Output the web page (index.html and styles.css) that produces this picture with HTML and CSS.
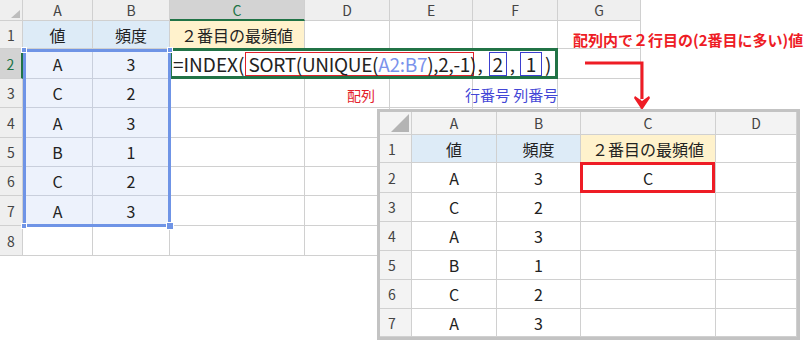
FILE: index.html
```html
<!DOCTYPE html>
<html lang="ja">
<head>
    <meta charset="UTF-8">
    <title>INDEX SORT UNIQUE 最頻値</title>
    <link rel="stylesheet" href="styles.css">
</head>
<body>
<div class="page">

    <!-- 数式を入力中のシート -->
    <div class="sheet sheet-main">
        <div class="corner"><span class="tri"></span></div>
        <div class="hd">A</div><div class="hd">B</div><div class="hd sel">C</div><div class="hd">D</div><div class="hd">E</div><div class="hd">F</div><div class="hd">G</div>

        <div class="rh">1</div><div class="c blue">値</div><div class="c blue">頻度</div><div class="c yellow">２番目の最頻値</div><div class="c"></div><div class="c"></div><div class="c"></div><div class="c"></div>

        <div class="rh sel">2</div><div class="c ref">A</div><div class="c ref">3</div>
        <div class="c formula">
            <span>=INDEX(</span><span class="box box-red">SORT(UNIQUE(<span class="rng">A2:B7</span>),2,-1)</span><span class="sep">,</span><span class="box box-blue">2</span><span class="sep sep-short">,</span><span class="box box-blue box-wide">1</span><span class="close">)</span>
        </div>
        <div class="c"></div>

        <div class="rh">3</div><div class="c ref">C</div><div class="c ref">2</div><div class="c"></div><div class="c"></div><div class="c"></div><div class="c"></div><div class="c"></div>
        <div class="rh">4</div><div class="c ref">A</div><div class="c ref">3</div><div class="c"></div><div class="c"></div><div class="c"></div><div class="c"></div><div class="c"></div>
        <div class="rh">5</div><div class="c ref">B</div><div class="c ref">1</div><div class="c"></div><div class="c"></div><div class="c"></div><div class="c"></div><div class="c"></div>
        <div class="rh">6</div><div class="c ref">C</div><div class="c ref">2</div><div class="c"></div><div class="c"></div><div class="c"></div><div class="c"></div><div class="c"></div>
        <div class="rh">7</div><div class="c ref">A</div><div class="c ref">3</div><div class="c"></div><div class="c"></div><div class="c"></div><div class="c"></div><div class="c"></div>
        <div class="rh">8</div><div class="c"></div><div class="c"></div><div class="c"></div><div class="c"></div><div class="c"></div><div class="c"></div><div class="c"></div>

        <!-- 参照範囲 A2:B7 の枠 -->
        <div class="range">
            <span class="handle h-tl"></span><span class="handle h-tr"></span><span class="handle h-bl"></span><span class="handle h-br"></span>
        </div>

        <span class="note note-array">配列</span>
        <span class="note note-rowcol">行番号 列番号</span>
    </div>

    <div class="title">配列内で２行目の(2番目に多い)値</div>

    <svg class="arrow" width="80" height="60" viewBox="0 0 80 60">
        <polyline points="5,8 62,8 62,44" fill="none" stroke="#ee1c25" stroke-width="3"/>
        <polygon points="55,41 62,46 69,41 70,43 62,55 54,43" fill="#ee1c25"/>
    </svg>

    <!-- 結果のシート -->
    <div class="sheet sheet-sub">
        <div class="corner"><span class="tri"></span></div>
        <div class="hd">A</div><div class="hd">B</div><div class="hd">C</div><div class="hd">D</div>

        <div class="rh">1</div><div class="c blue">値</div><div class="c blue">頻度</div><div class="c yellow">２番目の最頻値</div><div class="c"></div>
        <div class="rh">2</div><div class="c">A</div><div class="c">3</div><div class="c">C</div><div class="c"></div>
        <div class="rh">3</div><div class="c">C</div><div class="c">2</div><div class="c"></div><div class="c"></div>
        <div class="rh">4</div><div class="c">A</div><div class="c">3</div><div class="c"></div><div class="c"></div>
        <div class="rh">5</div><div class="c">B</div><div class="c">1</div><div class="c"></div><div class="c"></div>
        <div class="rh">6</div><div class="c">C</div><div class="c">2</div><div class="c"></div><div class="c"></div>
        <div class="rh">7</div><div class="c">A</div><div class="c">3</div><div class="c"></div><div class="c"></div>

        <div class="result"></div>
    </div>

</div>
</body>
</html>
```

FILE: styles.css
```css
body {
    margin: 0;
    font-family: "Noto Sans CJK JP", "Liberation Sans", sans-serif;
    color: #222;
    background: #fff;
}
.page {
    position: relative;
    width: 809px;
    height: 340px;
    overflow: hidden;
}
.sheet {
    display: grid;
    position: relative;
    background: #fff;
}
.sheet-main {
    grid-template-columns: 23px 70px 77px 135px 85px 83px 85px 83px;
    grid-template-rows: 21px 28px 30px 29px 30px 29px 29px 30px 30px;
    width: 641px;
}
.sheet-sub {
    position: absolute;
    left: 377px;
    top: 109px;
    border: 3px solid #c3c3c3;
    grid-template-columns: 32px 85px 84px 135px 81px;
    grid-template-rows: 23px 28px 30px 29px 29px 29px 29px 28px;
}

/* セル */
.c, .hd, .rh, .corner {
    box-sizing: border-box;
    border-right: 1px solid #d0d0d0;
    border-bottom: 1px solid #d0d0d0;
    display: flex;
    align-items: center;
    justify-content: center;
    white-space: nowrap;
}
.c {
    font-size: 16px;
}
.hd, .rh, .corner {
    background: #efefef;
    color: #444;
    font-size: 14px;
}
.sheet-sub .hd, .sheet-sub .rh, .sheet-sub .corner {
    background: #f3f3f3;
}
.sheet-sub .rh {
    justify-content: flex-start;
    padding-left: 8px;
}
.hd.sel {
    background: #d3d3d3;
    color: #217346;
    border-bottom: 2px solid #217346;
}
.rh.sel {
    background: #d3d3d3;
    color: #217346;
    border-right: 2px solid #217346;
}
.corner {
    position: relative;
}
.tri {
    position: absolute;
    right: 2px;
    bottom: 2px;
    width: 0;
    height: 0;
    border-left: 9px solid transparent;
    border-bottom: 8px solid #bdbdbd;
}
.sheet-sub .tri {
    right: 2px;
    bottom: 2px;
    border-left: 18px solid transparent;
    border-bottom: 18px solid #b4b4b4;
}
.blue {
    background: #ddebf7;
}
.yellow {
    background: #fff2cc;
}
.ref {
    background: #edf2fc;
    border-color: #c9cfdc;
}

/* 数式 */
.formula {
    grid-column: 4 / 8;
    justify-content: flex-start;
    border: 3px solid #217346;
    margin: -1px 0 0 -1px;
    padding-left: 1px;
    font-size: 19px;
    color: #222;
}
.box {
    box-sizing: border-box;
    height: 24px;
    line-height: 22px;
    padding: 0 2px;
    display: inline-block;
}
.box-red {
    border: 1px solid #e0202a;
    margin-left: 1px;
    width: 229px;
    letter-spacing: -0.3px;
}
.box-blue {
    border: 1px solid #3b3fcf;
    width: 18px;
    text-align: center;
    padding: 0;
}
.box-wide {
    width: 22px;
}
.sep {
    padding: 0 6px 0 3px;
}
.sep-short {
    padding: 0 5px 0 3px;
}
.close {
    padding-left: 3px;
}
.rng {
    color: #7b93ec;
}

/* 参照範囲 */
.range {
    position: absolute;
    grid-column: 2 / 4;
    grid-row: 3 / 9;
    top: 0;
    left: 0;
    right: -1px;
    bottom: -1px;
    border: 3px solid #6f94e6;
}
.handle {
    position: absolute;
    width: 4px;
    height: 4px;
    background: #6f94e6;
    border: 1px solid #fff;
}
.h-tl { left: -5px; top: -5px; }
.h-tr { right: -5px; top: -5px; }
.h-bl { left: -5px; bottom: -5px; }
.h-br { right: -6px; bottom: -6px; width: 6px; height: 6px; }

.note {
    position: absolute;
    grid-row: 4 / 5;
    top: 6px;
    font-size: 14px;
    white-space: nowrap;
}
.note-array {
    grid-column: 5 / 6;
    left: 42px;
    color: #e3202a;
}
.note-rowcol {
    grid-column: 6 / 7;
    left: 75px;
    font-size: 15px;
    top: 5px;
    color: #4346d6;
}

.title {
    position: absolute;
    left: 573px;
    top: 29px;
    font-size: 15px;
    font-weight: bold;
    color: #ee1c25;
    white-space: nowrap;
}
.arrow {
    position: absolute;
    left: 580px;
    top: 55px;
}

.result {
    position: absolute;
    grid-column: 4 / 5;
    grid-row: 3 / 4;
    top: -1px;
    left: -1px;
    right: 1px;
    bottom: 0;
    border: 3px solid #ee1c25;
}
```
